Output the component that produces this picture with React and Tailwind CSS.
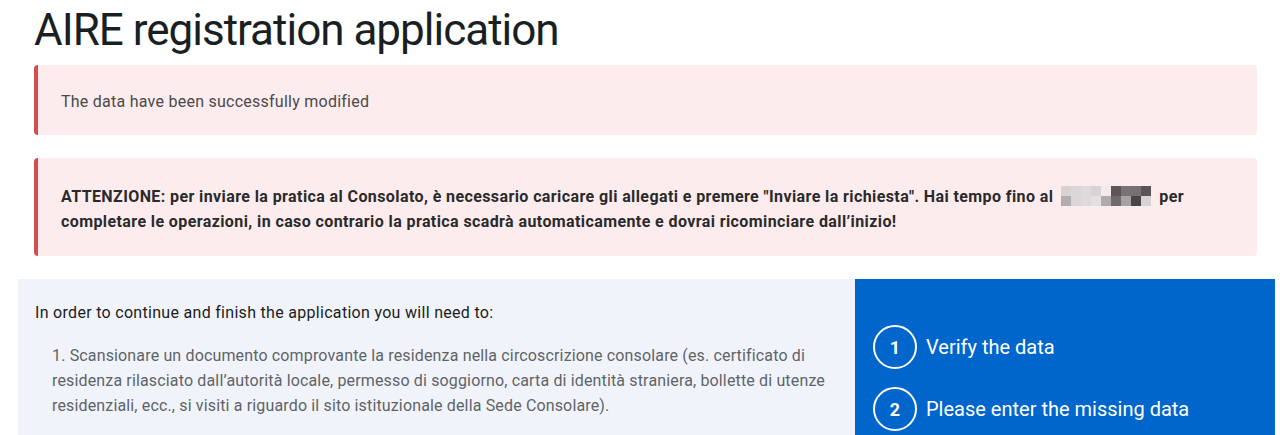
import React from 'react';

const mosaic = [
  ['#d8d2d4', '#dcd6d8', '#dfd9db', '#d9d3d5', '#f6e9eb', '#5d5659', '#7a7375', '#777072', '#5b5457'],
  ['#b4adb0', '#dcd6d8', '#dfd9db', '#e4dfe0', '#b0aaad', '#706a6c', '#a8a2a4', '#4c4548', '#d8d2d4'],
];

const Redacted = () => (
  <span className="inline-flex flex-col align-middle mx-2 -mt-1">
    {mosaic.map((row, i) => (
      <span key={i} className="flex">
        {row.map((c, j) => (
          <span key={j} className="block w-[10px] h-[10px]" style={{ backgroundColor: c }} />
        ))}
      </span>
    ))}
  </span>
);

const Step = ({ n, label }) => (
  <div className="flex items-center gap-[9px]">
    <div className="w-[44px] h-[44px] rounded-full border-2 border-white flex items-center justify-center text-[18px] font-bold text-white">
      {n}
    </div>
    <span className="text-[20px] text-white">{label}</span>
  </div>
);

const App = () => {
  return (
    <div className="min-h-screen bg-white font-['Roboto',sans-serif] text-[#1c2024]">
      <div className="px-[34px] pr-[23px]">
        <h1 className="text-[44px] leading-[48px] pt-[6px] tracking-[-1px] text-[#1a1f24] font-normal">AIRE registration application</h1>

        <div className="mt-[11px] bg-[#fcecee] border-l-4 border-[#d1504b] rounded-[4px] px-[23px] pt-[25px] pb-[21px] text-[16px] leading-[24px] tracking-[0.25px] text-[#4a4a4a]">
          The data have been successfully modified
        </div>

        <div className="mt-[23px] bg-[#fcecee] border-l-4 border-[#d1504b] rounded-[4px] px-[23px] pt-[26px] pb-[22px] text-[16px] leading-[25px] tracking-[0.4px] font-bold text-[#2a2a2a]">
          ATTENZIONE: per inviare la pratica al Consolato, è necessario caricare gli allegati e premere "Inviare la richiesta". Hai tempo fino al
          <Redacted />
          per
          <br />
          completare le operazioni, in caso contrario la pratica scadrà automaticamente e dovrai ricominciare dall’inizio!
        </div>
      </div>

      <div className="mt-[23px] mx-[18px] mr-[5px] flex h-[200px]">
        <div className="flex-1 bg-[#f0f4fa] px-[17px] pt-[21px]">
          <p className="text-[16px] leading-[25px] tracking-[0.3px] text-[#1c1c1c]">In order to continue and finish the application you will need to:</p>
          <ol className="mt-[18px] pl-[17px] text-[16px] leading-[25px] tracking-[0.15px] text-[#5f6368]">
            <li>
              1. Scansionare un documento comprovante la residenza nella circoscrizione consolare (es. certificato di residenza rilasciato dall’autorità locale, permesso di soggiorno, carta di identità straniera, bollette di utenze residenziali, ecc., si visiti a riguardo il sito istituzionale della Sede Consolare).
            </li>
          </ol>
        </div>
        <div className="w-[420px] bg-[#0066cc] pl-[18px] pt-[46px] flex flex-col gap-[18px]">
          <Step n="1" label="Verify the data" />
          <Step n="2" label="Please enter the missing data" />
        </div>
      </div>
    </div>
  );
};

export default App;
